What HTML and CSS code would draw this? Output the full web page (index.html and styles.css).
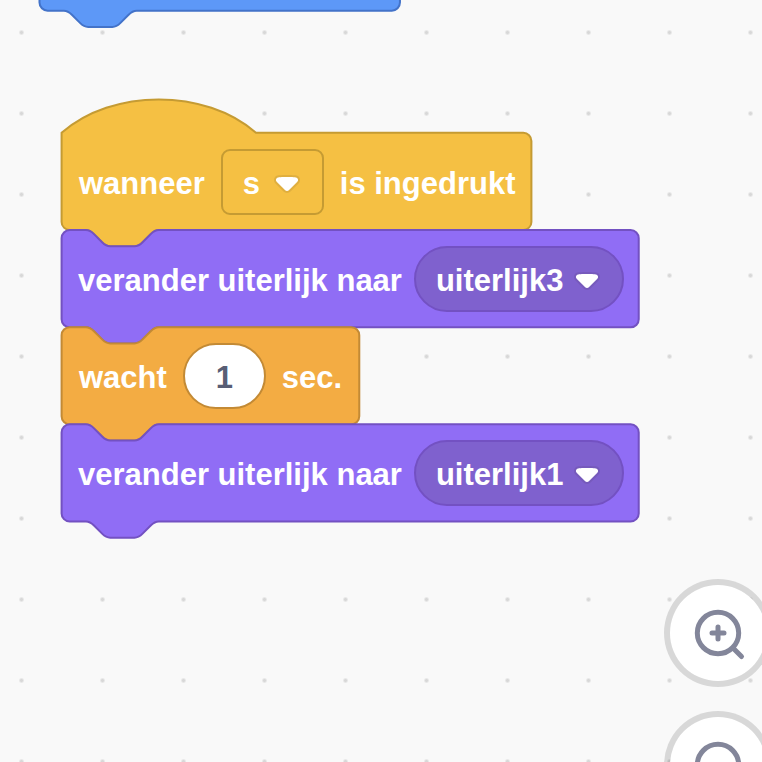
FILE: index.html
```html
<!DOCTYPE html>
<html lang="nl">
<head>
<meta charset="utf-8">
<title>Blokken</title>
<link rel="stylesheet" href="styles.css">
</head>
<body>
<svg class="defs" aria-hidden="true">
  <symbol id="arrow" viewBox="0 0 12.71 8.79">
    <path d="M12.71 2.44A2.41 2.41 0 0 1 12 4.16L8.08 8.08a2.45 2.45 0 0 1-3.45 0L.72 4.16A2.42 2.42 0 0 1 0 2.44 2.48 2.48 0 0 1 .71.71C1 .47 1.43 0 6.36 0S11.75.46 12 .71a2.44 2.44 0 0 1 .71 1.73Z" fill="#231f20" opacity=".1"/>
    <path d="M6.36 7.79a1.43 1.43 0 0 1-1-.42L1.42 3.45a1.44 1.44 0 0 1 0-2c.56-.56 9.31-.56 9.87 0a1.44 1.44 0 0 1 0 2L7.37 7.37a1.43 1.43 0 0 1-1.01.42Z" fill="#fff"/>
  </symbol>
</svg>
<main class="workspace">
  <div class="stack stack-motion">
    <div class="block motion">
      <svg class="shape" aria-hidden="true"><g transform="translate(.5 .5) scale(2.025)"><path d="M0 4A4 4 0 0 1 4 0H12c2 0 3 1 4 2l4 4c1 1 2 2 4 2h12c2 0 3-1 4-2l4-4c1-1 2-2 4-2H174a4 4 0 0 1 4 4v40a4 4 0 0 1-4 4H48c-2 0-3 1-4 2l-4 4c-1 1-2 2-4 2H24c-2 0-3-1-4-2l-4-4c-1-1-2-2-4-2H4a4 4 0 0 1-4-4z"/></g></svg>
    </div>
  </div>

  <div class="stack stack-event">
    <div class="block event">
      <svg class="shape" aria-hidden="true"><g transform="translate(.6 -.2) scale(2.025)"><path d="M0 0c25-22 71-22 96 0H228a4 4 0 0 1 4 4v40a4 4 0 0 1-4 4H48c-2 0-3 1-4 2l-4 4c-1 1-2 2-4 2H24c-2 0-3-1-4-2l-4-4c-1-1-2-2-4-2H4a4 4 0 0 1-4-4z"/></g></svg>
      <label for="key">wanneer</label>
      <span class="field">
        <select id="key" class="menu menu-square"><option>s</option></select>
        <svg class="arrow" aria-hidden="true"><use href="#arrow"/></svg>
      </span>
      <span>is ingedrukt</span>
    </div>

    <div class="block looks">
      <svg class="shape" aria-hidden="true"><g transform="translate(.6 .1) scale(2.025)"><path d="M0 4A4 4 0 0 1 4 0H12c2 0 3 1 4 2l4 4c1 1 2 2 4 2h12c2 0 3-1 4-2l4-4c1-1 2-2 4-2H281a4 4 0 0 1 4 4v40a4 4 0 0 1-4 4H48c-2 0-3 1-4 2l-4 4c-1 1-2 2-4 2H24c-2 0-3-1-4-2l-4-4c-1-1-2-2-4-2H4a4 4 0 0 1-4-4z"/></g></svg>
      <label for="costume-a">verander uiterlijk naar</label>
      <span class="field">
        <select id="costume-a" class="menu menu-round"><option>uiterlijk3</option></select>
        <svg class="arrow" aria-hidden="true"><use href="#arrow"/></svg>
      </span>
    </div>

    <div class="block control">
      <svg class="shape" aria-hidden="true"><g transform="translate(.6 .2) scale(2.025)"><path d="M0 4A4 4 0 0 1 4 0H12c2 0 3 1 4 2l4 4c1 1 2 2 4 2h12c2 0 3-1 4-2l4-4c1-1 2-2 4-2H143a4 4 0 0 1 4 4v40a4 4 0 0 1-4 4H48c-2 0-3 1-4 2l-4 4c-1 1-2 2-4 2H24c-2 0-3-1-4-2l-4-4c-1-1-2-2-4-2H4a4 4 0 0 1-4-4z"/></g></svg>
      <label for="seconds">wacht</label>
      <input id="seconds" class="number" type="text" value="1">
      <span>sec.</span>
    </div>

    <div class="block looks">
      <svg class="shape" aria-hidden="true"><g transform="translate(.6 .3) scale(2.025)"><path d="M0 4A4 4 0 0 1 4 0H12c2 0 3 1 4 2l4 4c1 1 2 2 4 2h12c2 0 3-1 4-2l4-4c1-1 2-2 4-2H281a4 4 0 0 1 4 4v40a4 4 0 0 1-4 4H48c-2 0-3 1-4 2l-4 4c-1 1-2 2-4 2H24c-2 0-3-1-4-2l-4-4c-1-1-2-2-4-2H4a4 4 0 0 1-4-4z"/></g></svg>
      <label for="costume-b">verander uiterlijk naar</label>
      <span class="field">
        <select id="costume-b" class="menu menu-round"><option>uiterlijk1</option></select>
        <svg class="arrow" aria-hidden="true"><use href="#arrow"/></svg>
      </span>
    </div>
  </div>

  <div class="zoom">
    <button class="zoom-button" type="button" aria-label="Inzoomen">
      <svg viewBox="0 0 96 96" aria-hidden="true"><circle cx="48" cy="48" r="20.7"/><path d="M42 48h12M48 42v12M63 63l8.5 8.5"/></svg>
    </button>
    <button class="zoom-button" type="button" aria-label="Uitzoomen">
      <svg viewBox="0 0 96 96" aria-hidden="true"><circle cx="48" cy="48" r="20.7"/><path d="M42 48h12M63 63l8.5 8.5"/></svg>
    </button>
  </div>
</main>
</body>
</html>
```
FILE: styles.css
```css
* {
  box-sizing: border-box;
}

body {
  margin: 0;
  font-family: "Liberation Sans", Arial, sans-serif;
  font-size: 31px;
  font-weight: 700;
  color: #fff;
}

.defs {
  display: none;
}

.workspace {
  position: relative;
  min-height: 100vh;
  overflow: hidden;
  background-color: #f9f9f9;
  background-image: radial-gradient(circle, #d8d8d8 1px, transparent 3px);
  background-size: 81px 81px;
  background-position: -19px -8px;
}

.stack {
  position: absolute;
  display: flex;
  flex-direction: column;
  align-items: flex-start;
}

.stack-motion {
  left: 39px;
  top: -87px;
}

.stack-event {
  left: 61px;
  top: 133px;
}

.block {
  position: relative;
  display: flex;
  align-items: center;
  gap: 16px;
  height: 97px;
  padding: 0 18px;
  line-height: 40px;
  white-space: nowrap;
}

.block > :not(.shape) {
  position: relative;
}

.block > label,
.block > span:not(.field) {
  padding-top: 4px;
}

.shape {
  position: absolute;
  left: 0;
  top: 0;
  width: 100%;
  height: 100%;
  overflow: visible;
  fill: var(--fill);
  stroke: var(--edge);
  stroke-width: 1;
}

.motion {
  --fill: #5d98f7;
  --edge: #4373c9;
}

.event {
  --fill: #f5c043;
  --edge: #c59b33;
}

.looks {
  --fill: #906df5;
  --edge: #7351c2;
  gap: 12px;
  padding: 0 17px;
}

.control {
  --fill: #f3ac43;
  --edge: #c38a35;
}

.field {
  display: flex;
}

.menu,
.number {
  height: 66px;
  margin: 0;
  font: inherit;
  border: 2px solid var(--edge);
}

.menu {
  appearance: none;
  padding: 4px 50px 0 20px;
  color: #fff;
}

.menu-square {
  width: 103px;
  border-radius: 9px;
  background: var(--fill);
}

.menu-round {
  width: 210px;
  border-radius: 33px;
  background: #7f61ce;
}

.arrow {
  position: absolute;
  right: 24px;
  top: 26px;
  width: 26px;
  height: 18px;
  pointer-events: none;
}

.number {
  width: 83px;
  padding: 4px 0 0;
  border-radius: 33px;
  background: #fff;
  color: #585e75;
  text-align: center;
}

.zoom {
  position: absolute;
  top: 579px;
  right: -10px;
  display: flex;
  flex-direction: column;
  gap: 24px;
}

.zoom-button {
  width: 108px;
  height: 108px;
  padding: 0;
  border: 6px solid rgba(0, 0, 0, 0.13);
  border-radius: 50%;
  background: #fff;
  background-clip: padding-box;
}

.zoom-button svg {
  display: block;
  width: 96px;
  height: 96px;
  fill: none;
  stroke: #83869a;
  stroke-width: 5;
  stroke-linecap: round;
}
```
